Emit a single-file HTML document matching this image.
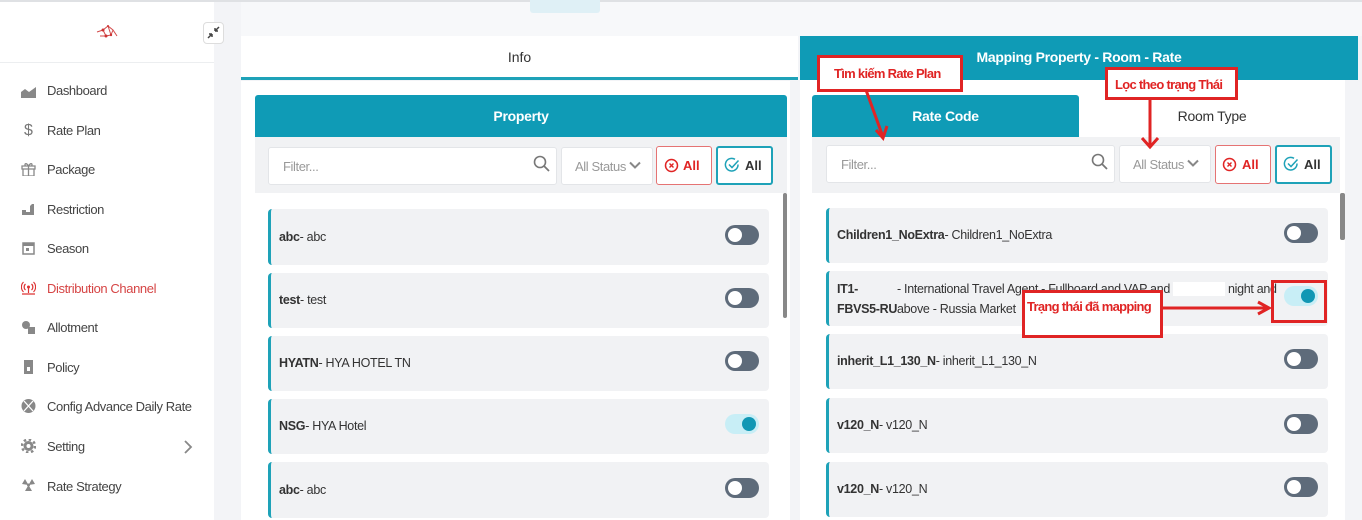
<!DOCTYPE html>
<html><head><meta charset="utf-8"><style>
*{box-sizing:border-box;margin:0;padding:0}
body{width:1362px;height:520px;overflow:hidden;background:#f3f4f7;font-family:"Liberation Sans","Noto Sans CJK SC",sans-serif;position:relative;color:#333}
.a{position:absolute;white-space:nowrap}
.side{left:0;top:2px;width:214px;height:518px;background:#fff}
.mi{position:absolute;left:47px;font-size:13px;color:#444;letter-spacing:-0.4px}
.ic{position:absolute;left:21px;width:15px;height:14px}
.tealbg{background:#0f9bb6;color:#fff;letter-spacing:-0.3px}
.inp{background:#fff;border:1px solid #e3e5e8;border-radius:3px;color:#999;font-size:13px;letter-spacing:-0.4px}
.item{background:#f1f2f4;border-left:3px solid #1ea2b8;border-radius:4px;font-size:12.5px;color:#333;letter-spacing:-0.3px}
.tg{position:absolute;width:34px;height:20px;border-radius:10px;background:#5e6b7a}
.tg::after{content:"";position:absolute;left:3px;top:3px;width:14px;height:14px;border-radius:50%;background:#fff}
.tg.on{background:#c8eef6}
.tg.on::after{left:auto;right:3px;background:#1197b4}
.rb{border:3px solid #e02424}
.rt{color:#e02424;font-weight:bold;font-size:13px;letter-spacing:-0.7px}
</style></head><body>
<div class="a" style="left:0;top:0;width:1362px;height:2px;background:#dfe1e4"></div>
<div class="a" style="left:241px;top:2px;width:1121px;height:34px;background:#f7f8fa"></div>
<div class="a" style="left:530px;top:0;width:70px;height:13px;background:#dff0f6;border-radius:0 0 3px 3px"></div>
<div class="a side"></div>
<svg class="a" style="left:95px;top:24px" width="24" height="16" viewBox="0 0 24 16"><g stroke="#d34a4a" stroke-width="1" fill="none"><path d="M2 8L8 6L13 2L18 6L22 12M8 6L11 12L16 11L18 6M5 12L11 12M13 2L16 11"/></g><g fill="#c33"><circle cx="8" cy="6" r="1.5"/><circle cx="11" cy="12" r="1.5"/><circle cx="16" cy="11" r="1.2"/><circle cx="13" cy="2" r="1"/></g></svg>
<div class="a" style="left:203px;top:22px;width:21px;height:22px;border:1px solid #ddd;border-radius:4px;background:#fff"></div>
<svg class="a" style="left:207px;top:26px" width="13" height="13" viewBox="0 0 13 13"><path d="M1 12L5 8M5 8H2M5 8V11M12 1L8 5M8 5H11M8 5V2" stroke="#444" stroke-width="1.5" fill="none"/></svg>
<div class="a" style="left:0;top:62px;width:214px;height:1px;background:#eceef0"></div>

<svg class="ic" style="top:84px" viewBox="0 0 15 14"><path d="M0 14V8L4 5L8 8L15 3V14Z" fill="#888"/></svg>
<div class="mi" style="top:83px">Dashboard</div>
<div class="ic" style="top:122px;font-size:16px;color:#777;left:24px">$</div>
<div class="mi" style="top:123px">Rate Plan</div>
<svg class="ic" style="top:162px" viewBox="0 0 15 14"><path d="M1 4H14V7H1ZM2 7H13V14H2ZM7.5 4V14M7.5 4C5 0 3 2 4.5 4M7.5 4C10 0 12 2 10.5 4" stroke="#888" fill="none" stroke-width="1.3"/></svg>
<div class="mi" style="top:162px">Package</div>
<svg class="ic" style="top:201px" viewBox="0 0 15 14"><path d="M1 14V9H5V11H9V5L11 3H13V14Z" fill="#888"/></svg>
<div class="mi" style="top:202px">Restriction</div>
<svg class="ic" style="top:241px" viewBox="0 0 15 14"><rect x="2" y="2" width="11" height="11" stroke="#888" fill="none" stroke-width="1.5"/><rect x="2" y="2" width="11" height="3" fill="#888"/><rect x="5" y="7" width="3" height="3" fill="#888"/></svg>
<div class="mi" style="top:241px">Season</div>
<svg class="ic" style="top:281px" viewBox="0 0 15 14"><circle cx="7.5" cy="6" r="1.5" fill="#d33"/><path d="M4.5 3A4 4 0 0 0 4.5 9M10.5 3A4 4 0 0 1 10.5 9M2.5 1A7 7 0 0 0 2.5 11M12.5 1A7 7 0 0 1 12.5 11M7.5 7V12M1 13H14" stroke="#d33" fill="none" stroke-width="1.2"/></svg>
<div class="mi" style="top:281px;color:#d64545">Distribution Channel</div>
<svg class="ic" style="top:320px" viewBox="0 0 15 14"><circle cx="5" cy="5" r="4" fill="#888"/><rect x="7" y="7" width="7" height="7" fill="#888"/></svg>
<div class="mi" style="top:320px">Allotment</div>
<svg class="ic" style="top:360px" viewBox="0 0 15 14"><path d="M3 0H12V14H3Z" fill="#888"/><rect x="6" y="7" width="3" height="4" fill="#fff"/></svg>
<div class="mi" style="top:360px">Policy</div>
<svg class="ic" style="top:399px" viewBox="0 0 15 14"><circle cx="7.5" cy="7" r="7" fill="#888"/><path d="M3 2L12 12M12 2L3 12" stroke="#fff" stroke-width="1.3"/></svg>
<div class="mi" style="top:399px">Config Advance Daily Rate</div>
<svg class="ic" style="top:439px" viewBox="0 0 15 14"><circle cx="7.5" cy="7" r="5" fill="#888"/><circle cx="7.5" cy="7" r="6.5" fill="none" stroke="#888" stroke-width="2.5" stroke-dasharray="2.5 2.6"/><circle cx="7.5" cy="7" r="2" fill="#fff"/></svg>
<div class="mi" style="top:439px">Setting</div>
<svg class="a" style="left:183px;top:440px" width="10" height="14" viewBox="0 0 10 14"><path d="M2 1L8 7L2 13" stroke="#888" stroke-width="1.8" fill="none"/></svg>
<svg class="ic" style="top:478px" viewBox="0 0 15 14"><circle cx="7.5" cy="7" r="1.5" fill="#888"/><path d="M7.5 7L4 1L1 6ZM7.5 7L11 1L14 6ZM7.5 7L4 13H11Z" fill="#888"/></svg>
<div class="mi" style="top:479px">Rate Strategy</div>

<!-- tabs -->
<div class="a" style="left:241px;top:36px;width:557px;height:44px;background:#fff;border-bottom:3px solid #1ea2b8;text-align:center;line-height:42px;font-size:14px;color:#333">Info</div>
<div class="a tealbg" style="left:800px;top:36px;width:558px;height:44px;text-align:center;line-height:42px;font-size:14px;font-weight:bold">Mapping Property - Room - Rate</div>
<div class="a" style="left:241px;top:81px;width:549px;height:439px;background:#fff"></div>
<div class="a" style="left:800px;top:80px;width:545px;height:440px;background:#fff"></div>

<!-- left panel -->
<div class="a tealbg" style="left:255px;top:95px;width:532px;height:42px;border-radius:3px 3px 0 0;text-align:center;line-height:42px;font-size:14px;font-weight:bold">Property</div>
<div class="a" style="left:255px;top:137px;width:532px;height:56px;background:#f1f2f4"></div>
<div class="a inp" style="left:268px;top:147px;width:289px;height:38px;padding:11px 14px">Filter...</div>
<svg class="a" style="left:533px;top:155px" width="17" height="17" viewBox="0 0 17 17"><circle cx="7" cy="7" r="5.5" stroke="#777" stroke-width="1.6" fill="none"/><path d="M11 11L16 16" stroke="#777" stroke-width="1.8"/></svg>
<div class="a inp" style="left:561px;top:147px;width:92px;height:38px;padding:11px 13px">All Status</div>
<svg class="a" style="left:629px;top:161px" width="12" height="9" viewBox="0 0 12 9"><path d="M1 1.5L6 6.5L11 1.5" stroke="#888" stroke-width="2" fill="none"/></svg>
<div class="a" style="left:656px;top:146px;width:56px;height:39px;border:1px solid #e57373;border-radius:3px;background:#fff;color:#e02424;font-weight:bold;font-size:13px;padding:11px 0 0 26px">All</div>
<svg class="a" style="left:664px;top:158px" width="15" height="15" viewBox="0 0 15 15"><circle cx="7.5" cy="7.5" r="6" stroke="#e02424" stroke-width="1.5" fill="none"/><path d="M5.5 5.5L9.5 9.5M9.5 5.5L5.5 9.5" stroke="#e02424" stroke-width="1.4"/></svg>
<div class="a" style="left:716px;top:146px;width:57px;height:39px;border:2px solid #1ea2b8;border-radius:3px;background:#fff;color:#333;font-weight:bold;font-size:13px;padding:10px 0 0 27px">All</div>
<svg class="a" style="left:724px;top:157px" width="16" height="16" viewBox="0 0 16 16"><path d="M14 7.5A6.3 6.3 0 1 1 11 2.3" stroke="#1ea2b8" stroke-width="1.5" fill="none"/><path d="M5 7.5L8 10.5L14.5 3.5" stroke="#1ea2b8" stroke-width="1.5" fill="none"/></svg>
<div class="a" style="left:783px;top:193px;width:4px;height:125px;background:#888;border-radius:2px"></div>

<div class="a item" style="left:268px;top:209px;width:501px;height:56px;padding:21px 8px"><b>abc</b>- abc</div><div class="tg" style="left:725px;top:225px"></div>
<div class="a item" style="left:268px;top:273px;width:501px;height:55px;padding:20px 8px"><b>test</b>- test</div><div class="tg" style="left:725px;top:288px"></div>
<div class="a item" style="left:268px;top:336px;width:501px;height:55px;padding:20px 8px"><b>HYATN</b>- HYA HOTEL TN</div><div class="tg" style="left:725px;top:351px"></div>
<div class="a item" style="left:268px;top:399px;width:501px;height:55px;padding:20px 8px"><b>NSG</b>- HYA Hotel</div><div class="tg on" style="left:725px;top:414px"></div>
<div class="a item" style="left:268px;top:462px;width:501px;height:56px;padding:21px 8px"><b>abc</b>- abc</div><div class="tg" style="left:725px;top:478px"></div>

<!-- right panel -->
<div class="a tealbg" style="left:812px;top:95px;width:267px;height:42px;border-radius:3px 3px 0 0;text-align:center;line-height:42px;font-size:14px;font-weight:bold">Rate Code</div>
<div class="a" style="left:1079px;top:95px;width:266px;height:42px;text-align:center;line-height:42px;font-size:14px;color:#333;letter-spacing:-0.3px">Room Type</div>
<div class="a" style="left:812px;top:137px;width:528px;height:56px;background:#f1f2f4"></div>
<div class="a inp" style="left:826px;top:145px;width:289px;height:38px;padding:11px 14px">Filter...</div>
<svg class="a" style="left:1091px;top:153px" width="17" height="17" viewBox="0 0 17 17"><circle cx="7" cy="7" r="5.5" stroke="#777" stroke-width="1.6" fill="none"/><path d="M11 11L16 16" stroke="#777" stroke-width="1.8"/></svg>
<div class="a inp" style="left:1119px;top:145px;width:92px;height:38px;padding:11px 13px">All Status</div>
<svg class="a" style="left:1187px;top:159px" width="12" height="9" viewBox="0 0 12 9"><path d="M1 1.5L6 6.5L11 1.5" stroke="#888" stroke-width="2" fill="none"/></svg>
<div class="a" style="left:1215px;top:145px;width:56px;height:39px;border:1px solid #e57373;border-radius:3px;background:#fff;color:#e02424;font-weight:bold;font-size:13px;padding:11px 0 0 26px">All</div>
<svg class="a" style="left:1222px;top:157px" width="15" height="15" viewBox="0 0 15 15"><circle cx="7.5" cy="7.5" r="6" stroke="#e02424" stroke-width="1.5" fill="none"/><path d="M5.5 5.5L9.5 9.5M9.5 5.5L5.5 9.5" stroke="#e02424" stroke-width="1.4"/></svg>
<div class="a" style="left:1275px;top:145px;width:57px;height:39px;border:2px solid #1ea2b8;border-radius:3px;background:#fff;color:#333;font-weight:bold;font-size:13px;padding:10px 0 0 27px">All</div>
<svg class="a" style="left:1283px;top:156px" width="16" height="16" viewBox="0 0 16 16"><path d="M14 7.5A6.3 6.3 0 1 1 11 2.3" stroke="#1ea2b8" stroke-width="1.5" fill="none"/><path d="M5 7.5L8 10.5L14.5 3.5" stroke="#1ea2b8" stroke-width="1.5" fill="none"/></svg>
<div class="a" style="left:1340px;top:193px;width:5px;height:47px;background:#888;border-radius:2px"></div>

<div class="a item" style="left:826px;top:208px;width:502px;height:55px;padding:20px 8px"><b>Children1_NoExtra</b>- Children1_NoExtra</div><div class="tg" style="left:1284px;top:223px"></div>
<div class="a item" style="left:826px;top:271px;width:502px;height:55px;line-height:20px"><b style="position:absolute;left:8px;top:8px">IT1-<br>FBVS5-RU</b><div style="position:absolute;left:68px;top:8px">- International Travel Agent - Fullboard and VAP and <span style="background:#fff;color:#fff;padding:0 2px">xxxxxxxx</span> night and<br>above - Russia Market</div></div><div class="tg on" style="left:1284px;top:286px"></div>
<div class="a item" style="left:826px;top:334px;width:502px;height:55px;padding:20px 8px"><b>inherit_L1_130_N</b>- inherit_L1_130_N</div><div class="tg" style="left:1284px;top:349px"></div>
<div class="a item" style="left:826px;top:398px;width:502px;height:55px;padding:20px 8px"><b>v120_N</b>- v120_N</div><div class="tg" style="left:1284px;top:414px"></div>
<div class="a item" style="left:826px;top:462px;width:502px;height:55px;padding:20px 8px"><b>v120_N</b>- v120_N</div><div class="tg" style="left:1284px;top:477px"></div>

<!-- annotations -->
<div class="a rb" style="left:817px;top:55px;width:146px;height:37px;background:#fff"></div>
<div class="a rt" style="left:834px;top:66px">Tìm kiếm Rate Plan</div>
<div class="a rb" style="left:1105px;top:67px;width:133px;height:33px;background:#fff"></div>
<div class="a rt" style="left:1115px;top:77px">Lọc theo trạng Thái</div>
<div class="a rb" style="left:1022px;top:290px;width:141px;height:48px;background:#fff"></div>
<div class="a rt" style="left:1027px;top:299px">Trạng thái đã mapping</div>
<div class="a rb" style="left:1271px;top:280px;width:56px;height:43px"></div>
<svg class="a" style="left:0;top:0" width="1362" height="520"><g stroke="#e02424" stroke-width="3" fill="none"><path d="M866 90L883 137M876 130L883 138L887 126"/><path d="M1150 100V146M1142 138L1150 147L1158 138"/><path d="M1163 308H1268M1258 302L1269 308L1258 314"/></g></svg>
</body></html>
